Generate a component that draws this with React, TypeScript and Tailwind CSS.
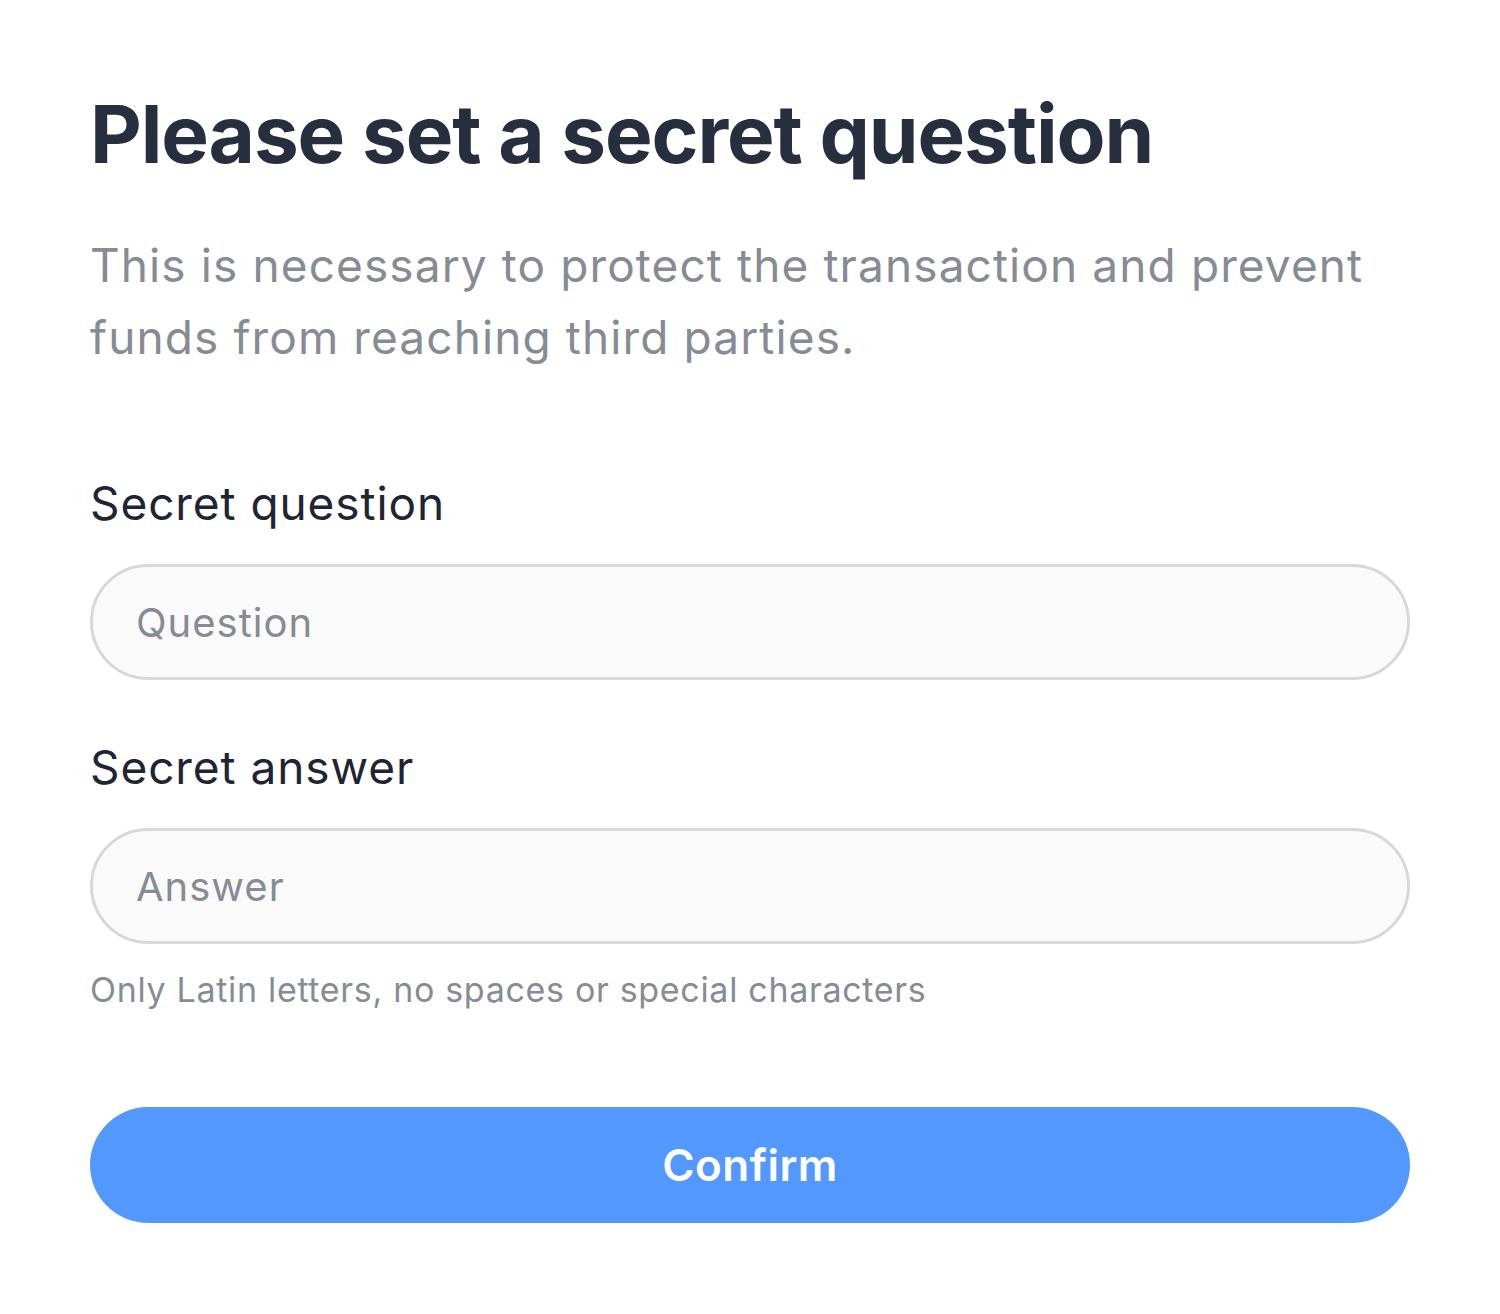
import React from "react";

export default function App() {
  return (
    <div className="min-h-[1314px] w-full bg-white font-['Inter',sans-serif]">
      <div className="px-[90px] pt-[86px]">
        <h1 className="text-[80px] font-bold leading-[1.2] tracking-[-0.014em] text-[#272f3e]">
          Please set a secret question
        </h1>
        <p className="mt-[47px] text-[46px] leading-[72px] tracking-[0.024em] text-[#878b94]">
          This is necessary to protect the transaction and prevent funds from reaching third parties.
        </p>

        <form className="mt-[100px] flex flex-col" onSubmit={(e) => e.preventDefault()}>
          <label className="text-[46px] leading-[60px] tracking-[0.02em] text-[#1f2532]">Secret question</label>
          <input
            placeholder="Question"
            className="mt-[31px] h-[116px] w-full rounded-full border-[3px] border-[#d7d8db] bg-[#fafafa] px-[43px] text-[40px] tracking-[0.025em] text-[#1f2532] outline-none placeholder:text-[#878b94]"
          />

          <label className="mt-[57px] text-[46px] leading-[60px] tracking-[0.02em] text-[#1f2532]">Secret answer</label>
          <input
            placeholder="Answer"
            className="mt-[31px] h-[116px] w-full rounded-full border-[3px] border-[#d7d8db] bg-[#fafafa] px-[43px] text-[40px] tracking-[0.025em] text-[#1f2532] outline-none placeholder:text-[#878b94]"
          />
          <span className="mt-[22px] text-[34px] leading-[48px] tracking-[0.02em] text-[#878b94]">
            Only Latin letters, no spaces or special characters
          </span>

          <button
            type="submit"
            className="mt-[93px] h-[116px] w-full rounded-full bg-[#5398ff] text-[44px] font-semibold tracking-[0.01em] text-white"
          >
            Confirm
          </button>
        </form>
      </div>
    </div>
  );
}
